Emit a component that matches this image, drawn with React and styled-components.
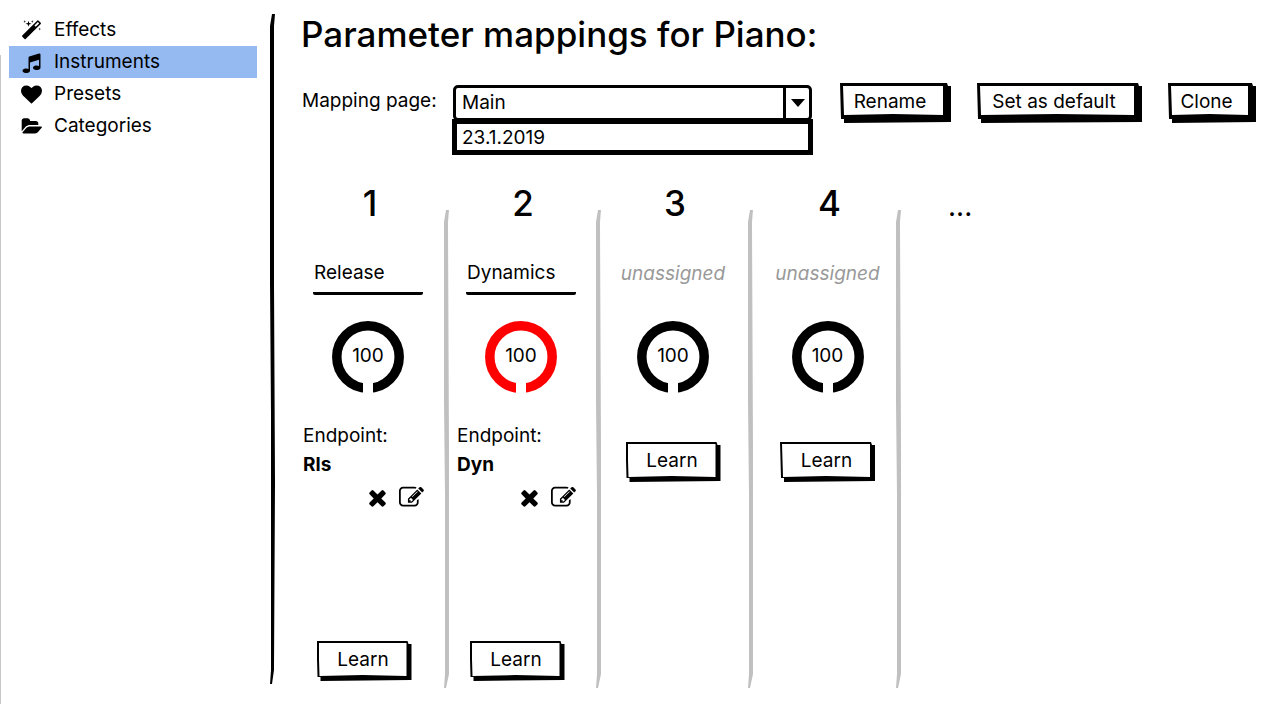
import React, { useState } from "react";
import styled, { createGlobalStyle, css } from "styled-components";

const GlobalStyle = createGlobalStyle`
  *, *::before, *::after { box-sizing: border-box; }
  body {
    margin: 0;
    background: #fff;
    color: #000;
    font-family: Inter, "Liberation Sans", sans-serif;
    font-size: 19px;
    line-height: 24px;
  }
  button, input, select { font: inherit; color: inherit; }
  h1, h2, p, ul { margin: 0; padding: 0; font-weight: 400; }
`;

const Page = styled.div`
  display: grid;
  grid-template-columns: 1px 269px 5px minmax(0, 1fr);
  min-height: 100vh;
`;

const WindowEdge = styled.div`
  margin: 55px 0 4px;
  background: #c8c8c8;
`;

const Sidebar = styled.nav`
  padding: 14px 13px 0 8px;
`;

const NavList = styled.ul`
  list-style: none;
`;

const NavLink = styled.a`
  display: flex;
  align-items: center;
  gap: 12px;
  height: 32px;
  padding: 0 12px;
  color: inherit;
  text-decoration: none;
  background: ${(p) => (p.$active ? "#95baf2" : "transparent")};
`;

const Glyph = styled.svg`
  flex: none;
  width: ${(p) => p.$size}px;
  height: ${(p) => p.$size}px;
  fill: currentColor;
`;

const PaneDivider = styled.div`
  margin: 14px 0 24px;
  background: #000;
  clip-path: polygon(
    2px 0, 5px 0, 4px 12px, 4px 40%, 5px 70%, 4px calc(100% - 14px), 2px 100%, 0 100%,
    1px calc(100% - 14px), 1px 60%, 0 40%, 0 12px
  );
`;

const Main = styled.main`
  display: flex;
  flex-direction: column;
  padding: 14px 30px 20px 20px;
`;

const Title = styled.h1`
  padding-left: 6px;
  font-size: 35px;
  font-weight: 500;
  line-height: 40px;
`;

const Toolbar = styled.div`
  display: flex;
  align-items: flex-start;
  margin-top: 29px;
  padding-left: 7px;
`;

const FieldLabel = styled.label`
  flex: none;
  width: 151px;
  padding-top: 6px;
`;

const Combo = styled.div`
  position: relative;
  flex: 1 1 359px;
  min-width: 160px;
  margin: 2px 28px 0 0;
`;

const ComboFrame = styled.div`
  display: grid;
  grid-template-columns: minmax(0, 1fr) 26px;
  height: 36px;
  border: 3px solid #000;
  border-radius: 5px;
`;

const ComboSelect = styled.select`
  width: 100%;
  padding: 0 0 0 6px;
  border: 0;
  appearance: none;
  background: transparent;
  outline: none;
`;

const ComboArrow = styled.span`
  display: flex;
  align-items: center;
  justify-content: center;
  border-left: 3px solid #000;

  &::after {
    content: "";
    border: 7px solid transparent;
    border-top: 8px solid #000;
    border-bottom: 0;
  }
`;

const ComboMenu = styled.ul`
  position: absolute;
  top: 34px;
  left: -1px;
  right: -1px;
  list-style: none;
  border: 5px solid #000;
  background: #fff;
`;

const ComboOption = styled.button`
  display: block;
  width: 100%;
  height: 26px;
  padding: 2px 5px 0;
  border: 0;
  background: transparent;
  text-align: left;
`;

const SketchButton = styled.button`
  --line: ${(p) => (p.$heavy ? "3px" : "2px")};
  --drop: ${(p) => (p.$heavy ? "8px" : "5px")};
  position: relative;
  isolation: isolate;
  flex: none;
  width: ${(p) => p.$width}px;
  height: 40px;
  padding: 0 ${(p) => (p.$heavy ? "11px" : "2px")} 2px 0;
  border: 0;
  background: #000;
  text-align: center;
  clip-path: polygon(
    0 0, calc(100% - 4px) 0, calc(100% - 3px) 3px, 100% 3px, 100% calc(100% - 1px),
    4px 100%, 4px calc(100% - 4px), 1px calc(100% - 4px)
  );

  &::before {
    content: "";
    position: absolute;
    z-index: -1;
    inset: var(--line) var(--drop) var(--drop) var(--line);
    background: #fff;
    clip-path: polygon(0 0, 100% 0, 100% 100%, 50% calc(100% - 1px), 1px 100%);
  }
`;

const ToolbarActions = styled.div`
  display: flex;
  gap: 26px;
`;

const Slots = styled.div`
  flex: 1;
  display: grid;
  grid-template-columns: 154fr 152fr 152fr 148fr 355fr;
  margin-top: 61px;
`;

const Slot = styled.section`
  display: flex;
  min-height: 500px;
`;

const SlotBody = styled.div`
  flex: 1;
  display: flex;
  flex-direction: column;
  align-items: center;
  margin-right: ${(p) => (p.$last ? "-6px" : "3px")};
`;

const SlotRule = styled.div`
  width: 5px;
  margin-top: 26px;
  background: #c0c0c0;
  clip-path: polygon(
    2px 0, 5px 0, 4px 12px, 5px 50%, 5px calc(100% - 14px), 2px 100%, 0 100%,
    1px calc(100% - 14px), 1px 60%, 0 40%, 0 12px
  );
`;

const SlotNumber = styled.h2`
  padding-left: 4px;
  font-size: 35px;
  font-weight: 500;
  line-height: 38px;
`;

const NameRow = styled.div`
  display: flex;
  justify-content: center;
  height: 40px;
  margin-top: 37px;
`;

const NameInput = styled.input`
  width: 110px;
  height: 36px;
  padding: 0 0 6px 1px;
  border: 0;
  border-bottom: 3px solid #000;
  border-radius: 2px;
  background: transparent;
  outline: none;
`;

const Unassigned = styled.p`
  padding-top: 3px;
  color: #999;
  font-style: italic;
`;

const Knob = styled.div`
  display: grid;
  place-items: center;
  margin-top: 22px;
  color: ${(p) => p.$color};

  & > * { grid-area: 1 / 1; }
`;

const KnobRing = styled.svg`
  width: 72px;
  height: 72px;
  fill: none;
  stroke: currentColor;
`;

const KnobValue = styled.span`
  padding-bottom: 2px;
  color: #000;
`;

const Endpoint = styled.div`
  align-self: stretch;
  margin-top: 31px;
  padding: 0 17px 0 8px;
`;

const EndpointName = styled.p`
  margin-top: 5px;
  font-weight: 700;
`;

const EndpointActions = styled.div`
  display: flex;
  justify-content: flex-end;
  gap: 9px;
  margin-top: 8px;
`;

const IconButton = styled.button`
  display: flex;
  padding: 0;
  border: 0;
  background: transparent;
`;

const LearnArea = styled.div`
  ${(p) =>
    p.$bottom
      ? css`
          margin-top: auto;
          padding: 0 8px 7px 0;
        `
      : css`
          margin-top: 49px;
        `}
`;

const More = styled.p`
  padding-left: 47px;
  font-size: 28px;
  line-height: 44px;
`;

const ICONS = {
  magic:
    "M1254 581l293-293-107-107-293 293zm447-293q0 27-18 45l-1286 1286q-18 18-45 18t-45-18l-198-198q-18-18-18-45t18-45l1286-1286q18-18 45-18t45 18l198 198q18 18 18 45zm-1351-190l98 30-98 30-30 98-30-98-98-30 98-30 30-98zm350 162l196 60-196 60-60 196-60-196-196-60 196-60 60-196zm930 478l98 30-98 30-30 98-30-98-98-30 98-30 30-98zm-640-640l98 30-98 30-30 98-30-98-98-30 98-30 30-98z",
  music:
    "M1664 224v1120q0 50-34 89t-86 60.5-103.5 32-96.5 10.5-96.5-10.5-103.5-32-86-60.5-34-89 34-89 86-60.5 103.5-32 96.5-10.5q105 0 192 39v-537l-768 237v709q0 50-34 89t-86 60.5-103.5 32-96.5 10.5-96.5-10.5-103.5-32-86-60.5-34-89 34-89 86-60.5 103.5-32 96.5-10.5q105 0 192 39v-967q0-31 19-56.5t49-35.5l832-256q12-4 28-4 40 0 68 28t28 68z",
  heart:
    "M896 1664q-26 0-44-18l-624-602q-10-8-27.5-26t-55.5-65.5-68-97.5-53.5-121-23.5-138q0-220 127-344t351-124q62 0 126.5 21.5t120 58 95.5 68.5 76 68q36-36 76-68t95.5-68.5 120-58 126.5-21.5q224 0 351 124t127 344q0 221-229 450l-623 600q-18 18-44 18z",
  folder:
    "M1943 952q0 31-31 66l-336 396q-43 51-120.5 86.5t-143.5 35.5h-1088q-34 0-60.5-13t-26.5-43q0-31 31-66l336-396q43-51 120.5-86.5t143.5-35.5h1088q34 0 60.5 13t26.5 43zm-343-344v160h-832q-94 0-197 47.5t-164 119.5l-337 396-5 6q0-4-.5-12.5t-.5-12.5v-960q0-92 66-158t158-66h320q92 0 158 66t66 158v32h544q92 0 158 66t66 158z",
  times:
    "M1490 1322q0 40-28 68l-136 136q-28 28-68 28t-68-28l-294-294-294 294q-28 28-68 28t-68-28l-136-136q-28-28-28-68t28-68l294-294-294-294q-28-28-28-68t28-68l136-136q28-28 68-28t68 28l294 294 294-294q28-28 68-28t68 28l136 136q28 28 28 68t-28 68l-294 294 294 294q28 28 28 68z",
  edit:
    "M888 1184l116-116-152-152-116 116v56h96v96h56zm440-720q-16-16-33 1l-350 350q-17 17-1 33t33-1l350-350q17-17 1-33zm80 594v190q0 119-84.5 203.5t-203.5 84.5h-832q-119 0-203.5-84.5t-84.5-203.5v-832q0-119 84.5-203.5t203.5-84.5h832q63 0 117 25 15 7 18 23 3 17-9 29l-49 49q-14 14-32 8-23-6-45-6h-832q-66 0-113 47t-47 113v832q0 66 47 113t113 47h832q66 0 113-47t47-113v-126q0-13 9-22l64-64q15-15 35-7t20 29zm-96-738l288 288-672 672h-288v-288zm444 132l-92 92-288-288 92-92q28-28 68-28t68 28l152 152q28 28 28 68t-28 68z",
};

const NAV = [
  { label: "Effects", icon: "magic" },
  { label: "Instruments", icon: "music" },
  { label: "Presets", icon: "heart" },
  { label: "Categories", icon: "folder" },
];

const SLOTS = [
  { id: 1, name: "Release", endpoint: "Rls", value: 100, color: "#000" },
  { id: 2, name: "Dynamics", endpoint: "Dyn", value: 100, color: "#f00" },
  { id: 3, value: 100, color: "#000" },
  { id: 4, value: 100, color: "#000" },
];

function Icon({ name, size = 20 }) {
  return (
    <Glyph $size={size} viewBox={name === "folder" ? "0 0 1943 1792" : "0 0 1792 1792"} aria-hidden="true">
      <path d={ICONS[name]} />
    </Glyph>
  );
}

function MappingSlot({ id, name, endpoint, value, color, last }) {
  return (
    <Slot aria-label={`Parameter ${id}`}>
      <SlotBody $last={last}>
        <SlotNumber>{id}</SlotNumber>
        <NameRow>
          {name ? (
            <NameInput aria-label={`Name of parameter ${id}`} defaultValue={name} />
          ) : (
            <Unassigned>unassigned</Unassigned>
          )}
        </NameRow>
        <Knob $color={color}>
          <KnobRing viewBox="0 0 72 72" aria-hidden="true">
            <circle cx="36" cy="36" r="31.2" strokeWidth="9.5" />
            <rect x="31" y="58" width="10" height="14" fill="#fff" stroke="none" />
          </KnobRing>
          <KnobValue>{value}</KnobValue>
        </Knob>
        {endpoint && (
          <Endpoint>
            <p>Endpoint:</p>
            <EndpointName>{endpoint}</EndpointName>
            <EndpointActions>
              <IconButton type="button" aria-label="Remove endpoint">
                <Icon name="times" size={25} />
              </IconButton>
              <IconButton type="button" aria-label="Edit endpoint">
                <Icon name="edit" size={25} />
              </IconButton>
            </EndpointActions>
          </Endpoint>
        )}
        <LearnArea $bottom={Boolean(endpoint)}>
          <SketchButton type="button" $width={95}>Learn</SketchButton>
        </LearnArea>
      </SlotBody>
      <SlotRule />
    </Slot>
  );
}

export default function App() {
  const [page, setPage] = useState("Main");
  return (
    <>
      <GlobalStyle />
      <Page>
        <WindowEdge />
        <Sidebar>
          <NavList>
            {NAV.map((item) => (
              <li key={item.label}>
                <NavLink href={`#${item.label.toLowerCase()}`} $active={item.label === "Instruments"}>
                  <Icon name={item.icon} size={21} />
                  {item.label}
                </NavLink>
              </li>
            ))}
          </NavList>
        </Sidebar>
        <PaneDivider />
        <Main>
          <Title>Parameter mappings for Piano:</Title>
          <Toolbar>
            <FieldLabel htmlFor="mapping-page">Mapping page:</FieldLabel>
            <Combo>
              <ComboFrame>
                <ComboSelect id="mapping-page" value={page} onChange={(e) => setPage(e.target.value)}>
                  <option>Main</option>
                  <option>23.1.2019</option>
                </ComboSelect>
                <ComboArrow />
              </ComboFrame>
              <ComboMenu>
                <li>
                  <ComboOption type="button" onClick={() => setPage("23.1.2019")}>23.1.2019</ComboOption>
                </li>
              </ComboMenu>
            </Combo>
            <ToolbarActions>
              <SketchButton type="button" $heavy $width={111}>Rename</SketchButton>
              <SketchButton type="button" $heavy $width={165}>Set as default</SketchButton>
              <SketchButton type="button" $heavy $width={88}>Clone</SketchButton>
            </ToolbarActions>
          </Toolbar>
          <Slots>
            {SLOTS.map((slot) => (
              <MappingSlot key={slot.id} {...slot} last={slot.id === SLOTS.length} />
            ))}
            <More>...</More>
          </Slots>
        </Main>
      </Page>
    </>
  );
}
